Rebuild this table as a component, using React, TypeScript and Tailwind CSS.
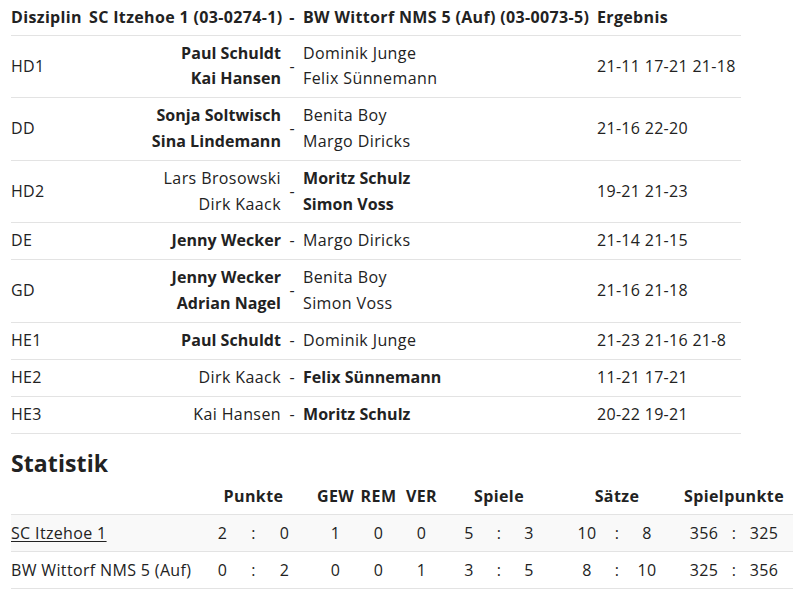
import type { ReactNode } from "react";

interface Match {
  disziplin: string;
  home: string[];
  away: string[];
  homeWon: boolean;
  result: string;
}

const MATCHES: Match[] = [
  {
    disziplin: "HD1",
    home: ["Paul Schuldt", "Kai Hansen"],
    away: ["Dominik Junge", "Felix Sünnemann"],
    homeWon: true,
    result: "21-11 17-21 21-18",
  },
  {
    disziplin: "DD",
    home: ["Sonja Soltwisch", "Sina Lindemann"],
    away: ["Benita Boy", "Margo Diricks"],
    homeWon: true,
    result: "21-16 22-20",
  },
  {
    disziplin: "HD2",
    home: ["Lars Brosowski", "Dirk Kaack"],
    away: ["Moritz Schulz", "Simon Voss"],
    homeWon: false,
    result: "19-21 21-23",
  },
  {
    disziplin: "DE",
    home: ["Jenny Wecker"],
    away: ["Margo Diricks"],
    homeWon: true,
    result: "21-14 21-15",
  },
  {
    disziplin: "GD",
    home: ["Jenny Wecker", "Adrian Nagel"],
    away: ["Benita Boy", "Simon Voss"],
    homeWon: true,
    result: "21-16 21-18",
  },
  {
    disziplin: "HE1",
    home: ["Paul Schuldt"],
    away: ["Dominik Junge"],
    homeWon: true,
    result: "21-23 21-16 21-8",
  },
  {
    disziplin: "HE2",
    home: ["Dirk Kaack"],
    away: ["Felix Sünnemann"],
    homeWon: false,
    result: "11-21 17-21",
  },
  {
    disziplin: "HE3",
    home: ["Kai Hansen"],
    away: ["Moritz Schulz"],
    homeWon: false,
    result: "20-22 19-21",
  },
];

interface TeamStats {
  name: string;
  link?: boolean;
  punkte: [string, string];
  gew: string;
  rem: string;
  ver: string;
  spiele: [string, string];
  saetze: [string, string];
  spielpunkte: [string, string];
}

const STATS: TeamStats[] = [
  {
    name: "SC Itzehoe 1",
    link: true,
    punkte: ["2", "0"],
    gew: "1",
    rem: "0",
    ver: "0",
    spiele: ["5", "3"],
    saetze: ["10", "8"],
    spielpunkte: ["356", "325"],
  },
  {
    name: "BW Wittorf NMS 5 (Auf)",
    punkte: ["0", "2"],
    gew: "0",
    rem: "0",
    ver: "1",
    spiele: ["3", "5"],
    saetze: ["8", "10"],
    spielpunkte: ["325", "356"],
  },
];

const ROW_GRID = "grid grid-cols-[78px_192px_22px_294px_144px] items-center";

function Names({ names, bold, right }: { names: string[]; bold: boolean; right?: boolean }) {
  return (
    <div
      className={`flex flex-col ${right ? "items-end" : "items-start"} ${
        bold ? "font-bold tracking-[0.05px]" : "tracking-[0.4px]"
      }`}
    >
      {names.map((n) => (
        <span key={n} className="whitespace-nowrap">
          {n}
        </span>
      ))}
    </div>
  );
}

function MatchTable() {
  return (
    <div className="w-[730px]">
      <div className={`${ROW_GRID} pt-[5px] pb-[4px] border-b border-[#e3e3e3] font-bold tracking-[0.35px]`}>
        <div>Disziplin</div>
        <div className="text-right whitespace-nowrap">SC Itzehoe 1 (03-0274-1)</div>
        <div className="text-center">-</div>
        <div className="whitespace-nowrap">BW Wittorf NMS 5 (Auf) (03-0073-5)</div>
        <div>Ergebnis</div>
      </div>
      {MATCHES.map((m) => (
        <div key={m.disziplin} className={`${ROW_GRID} py-[5.2px] border-b border-[#e3e3e3]`}>
          <div className="tracking-[0.3px]">{m.disziplin}</div>
          <Names names={m.home} bold={m.homeWon} right />
          <div className="text-center">-</div>
          <Names names={m.away} bold={!m.homeWon} />
          <div className="whitespace-nowrap tracking-[0.3px]">{m.result}</div>
        </div>
      ))}
    </div>
  );
}

// one cell of a "a : b" triple, centred even if it overflows
function Cell({ w, children }: { w: string; children?: ReactNode }) {
  return <div className={`${w} flex justify-center whitespace-nowrap`}>{children}</div>;
}

function Pair({ w, pair }: { w: string; pair: [string, string] }) {
  return (
    <>
      <Cell w={w}>{pair[0]}</Cell>
      <Cell w={w}>:</Cell>
      <Cell w={w}>{pair[1]}</Cell>
    </>
  );
}

function StatsTable() {
  return (
    <div className="w-[782px]">
      <div className="flex pt-[7.5px] pb-[4.6px] font-bold tracking-[0.4px]">
        <div className="w-[196px]" />
        <Cell w="w-[93px]">Punkte</Cell>
        <div className="w-[14px]" />
        <Cell w="w-[43px]">GEW</Cell>
        <Cell w="w-[43px]">REM</Cell>
        <Cell w="w-[43px]">VER</Cell>
        <div className="w-[11px]" />
        <Cell w="w-[90px]">Spiele</Cell>
        <div className="w-[28px]" />
        <Cell w="w-[90px]">Sätze</Cell>
        <div className="w-[27px]" />
        <Cell w="w-[90px]">Spielpunkte</Cell>
      </div>
      {STATS.map((s, i) => (
        <div
          key={s.name}
          className={`flex py-[5.2px] border-t border-[#e3e3e3] tracking-[0.3px] ${
            i === 0 ? "bg-[#f9f9f9]" : "border-b"
          }`}
        >
          <div className="w-[196px] whitespace-nowrap tracking-[0.35px]">
            {s.link ? <span className="underline underline-offset-2">{s.name}</span> : s.name}
          </div>
          <Pair w="w-[31px]" pair={s.punkte} />
          <div className="w-[14px]" />
          <Cell w="w-[43px]">{s.gew}</Cell>
          <Cell w="w-[43px]">{s.rem}</Cell>
          <Cell w="w-[43px]">{s.ver}</Cell>
          <div className="w-[11px]" />
          <Pair w="w-[30px]" pair={s.spiele} />
          <div className="w-[28px]" />
          <Pair w="w-[30px]" pair={s.saetze} />
          <div className="w-[27px]" />
          <Pair w="w-[30px]" pair={s.spielpunkte} />
        </div>
      ))}
    </div>
  );
}

export default function App() {
  return (
    <div className="w-[800px] h-[594px] overflow-hidden bg-white pl-[11px] text-[16px] leading-[25.6px] text-[#222] font-['Open_Sans',sans-serif]">
      <MatchTable />
      <h2 className="mt-[16px] mb-0 text-[23px] leading-[27px] font-bold tracking-[0.1px]">Statistik</h2>
      <StatsTable />
    </div>
  );
}
